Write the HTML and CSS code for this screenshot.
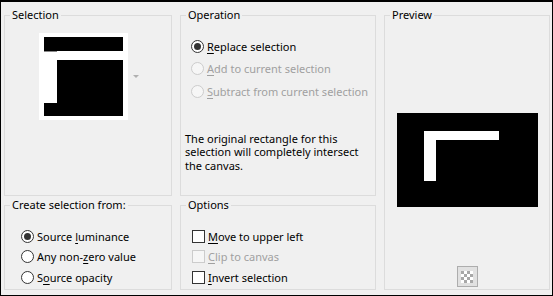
FILE: index.html
```html
<!DOCTYPE html>
<html lang="en">
  <head>
    <meta charset="UTF-8" />
    <title>Selection From Mask</title>
    <link rel="stylesheet" href="styles.css">
  </head>
  <body>
    <div class="dialog">
      <fieldset class="group group-selection">
        <legend>Selection</legend>
        <div class="thumb-row">
          <div class="thumb">
            <svg class="thumb-svg" viewBox="0 0 79 79" width="79" height="79">
              <rect x="0" y="0" width="79" height="79" fill="#000" />
              <rect x="0" y="14" width="13" height="52" fill="#fff" />
              <rect x="13" y="14" width="66" height="9" fill="#fff" />
              <line x1="0" y1="14.5" x2="13" y2="14.5" stroke="#888" stroke-width="1" />
            </svg>
          </div>
          <span class="drop-arrow"></span>
        </div>
      </fieldset>

      <fieldset class="group group-operation">
        <legend>Operation</legend>
        <div class="choice-list choice-list-wide">
          <div class="choice">
            <span class="radio radio-checked"></span>
            <span><u>R</u>eplace selection</span>
          </div>
          <div class="choice choice-disabled">
            <span class="radio"></span>
            <span><u>A</u>dd to current selection</span>
          </div>
          <div class="choice choice-disabled">
            <span class="radio"></span>
            <span><u>S</u>ubtract from current selection</span>
          </div>
        </div>
        <p class="note">
          The original rectangle for this<br />
          selection will completely intersect<br />
          the canvas.
        </p>
      </fieldset>

      <fieldset class="group group-preview">
        <legend>Preview</legend>
        <div class="preview-body">
          <svg class="preview-svg" viewBox="0 0 141 94" width="141" height="94">
            <rect x="0" y="0" width="141" height="94" fill="#000" />
            <rect x="27" y="18" width="75" height="9" fill="#fff" />
            <rect x="27" y="18" width="12" height="50" fill="#fff" />
          </svg>
          <span class="checker-btn">
            <svg viewBox="0 0 12 12" width="12" height="12">
              <rect width="12" height="12" fill="#fff" />
              <path d="M0 0h3v3H0zM6 0h3v3H6zM3 3h3v3H3zM9 3h3v3H9zM0 6h3v3H0zM6 6h3v3H6zM3 9h3v3H3zM9 9h3v3H9z" fill="#a8a8a8" />
            </svg>
          </span>
        </div>
      </fieldset>

      <fieldset class="group group-source">
        <legend>Create selection from:</legend>
        <div class="choice-list choice-list-tight">
          <div class="choice">
            <span class="radio radio-checked"></span>
            <span>Source <u>l</u>uminance</span>
          </div>
          <div class="choice">
            <span class="radio"></span>
            <span>Any non-<u>z</u>ero value</span>
          </div>
          <div class="choice">
            <span class="radio"></span>
            <span>S<u>o</u>urce opacity</span>
          </div>
        </div>
      </fieldset>

      <fieldset class="group group-options">
        <legend>Options</legend>
        <div class="choice-list choice-list-tight">
          <div class="choice">
            <span class="check"></span>
            <span><u>M</u>ove to upper left</span>
          </div>
          <div class="choice choice-disabled">
            <span class="check"></span>
            <span><u>C</u>lip to canvas</span>
          </div>
          <div class="choice">
            <span class="check"></span>
            <span><u>I</u>nvert selection</span>
          </div>
        </div>
      </fieldset>
    </div>
  </body>
</html>
```

FILE: styles.css
```css
:root {
  --dlg-bg: #f0f0f0;
  --dlg-line: #dcdcdc;
  --dlg-text: #000000;
  --dlg-muted: #a0a0a0;
  --dlg-mark: #333333;
}

* {
  margin: 0;
  padding: 0;
  box-sizing: border-box;
}

body {
  font-family: "Noto Sans", "Open Sans", sans-serif;
  font-size: 11px;
  color: var(--dlg-text);
  background: var(--dlg-bg);
}

.dialog {
  width: 553px;
  height: 296px;
  border: 1px solid #000;
  border-top-width: 2px;
  background: var(--dlg-bg);
  display: grid;
  grid-template-columns: 168px 196px 166px;
  grid-template-rows: 188px 92px;
  column-gap: 8px;
  row-gap: 2px;
  padding: 6px 0 0 3px;
}

.group {
  border: 1px solid var(--dlg-line);
  min-width: 0;
  margin: 0;
  padding: 0;
}

.group legend {
  margin-left: 5px;
  padding: 0 2px;
  line-height: 14px;
}

.group-preview {
  grid-row: 1 / span 2;
  grid-column: 3;
}

/* selection thumbnail */
.thumb-row {
  display: flex;
  align-items: center;
  margin: 11px 0 0 34px;
}

.thumb {
  width: 89px;
  height: 87px;
  background: #fff;
  display: flex;
  align-items: center;
  justify-content: center;
}

.thumb-svg {
  display: block;
}

.drop-arrow {
  width: 0;
  height: 0;
  margin-left: 5px;
  border-left: 3px solid transparent;
  border-right: 3px solid transparent;
  border-top: 3px solid #b0b0b0;
}

/* radio / check lists */
.choice-list {
  display: flex;
  flex-direction: column;
}

.choice-list-wide {
  margin: 13px 0 0 10px;
}

.choice-list-wide .choice {
  height: 22.5px;
}

.choice-list-tight {
  margin: 14px 0 0 16px;
}

.group-options .choice-list-tight {
  margin-left: 11px;
}

.choice-list-tight .choice {
  height: 20.5px;
}

.choice {
  display: flex;
  align-items: center;
  gap: 3px;
  white-space: nowrap;
}

.choice u {
  text-underline-offset: 2px;
}

.choice-disabled {
  color: var(--dlg-muted);
}

.radio {
  width: 13px;
  height: 13px;
  border-radius: 50%;
  border: 1px solid var(--dlg-mark);
  background: #fff;
  display: flex;
  align-items: center;
  justify-content: center;
  flex-shrink: 0;
}

.radio-checked::after {
  content: "";
  width: 7px;
  height: 7px;
  border-radius: 50%;
  background: var(--dlg-mark);
}

.check {
  width: 13px;
  height: 13px;
  border: 1px solid var(--dlg-mark);
  background: #fff;
  flex-shrink: 0;
}

.choice-disabled .radio,
.choice-disabled .check {
  border-color: #cccccc;
  background: #f6f6f6;
}

.note {
  margin: 29px 0 0 4px;
  line-height: 13.5px;
}

/* preview */
.preview-body {
  display: flex;
  flex-direction: column;
  align-items: center;
}

.preview-svg {
  display: block;
  margin-top: 91px;
}

.checker-btn {
  margin-top: 59px;
  width: 21px;
  height: 21px;
  border: 1px solid #adadad;
  background: #e1e1e1;
  display: flex;
  align-items: center;
  justify-content: center;
}

.checker-btn svg {
  display: block;
}
```
